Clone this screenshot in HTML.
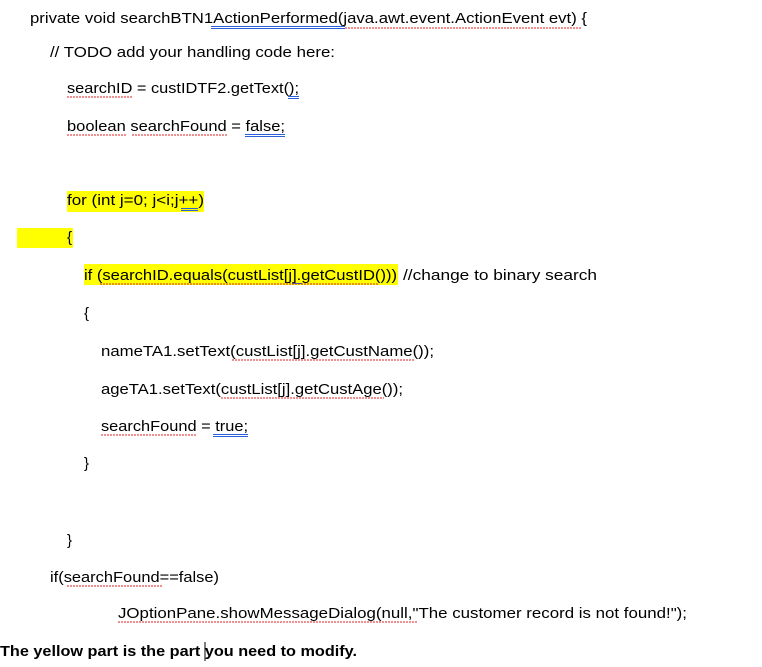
<!DOCTYPE html>
<html><head><meta charset="utf-8"><style>
html,body{margin:0;padding:0;background:#fff;width:762px;height:667px;overflow:hidden}
svg{display:block}
text{font-family:"Liberation Sans",sans-serif;font-size:15px;fill:#000}
</style></head><body>
<svg width="762" height="667" viewBox="0 0 762 667">
<g fill="#ffff00">
<rect x="67" y="191" width="137" height="21"/>
<rect x="17" y="228" width="56" height="20"/>
<rect x="84" y="264" width="314" height="21"/>
</g>
<text x="30" y="23" textLength="557" lengthAdjust="spacingAndGlyphs">private void searchBTN1ActionPerformed(java.awt.event.ActionEvent evt) {</text>
<text x="50" y="57" textLength="285" lengthAdjust="spacingAndGlyphs">// TODO add your handling code here:</text>
<text x="67" y="93" textLength="232" lengthAdjust="spacingAndGlyphs">searchID = custIDTF2.getText();</text>
<text x="67" y="131" textLength="218" lengthAdjust="spacingAndGlyphs">boolean searchFound = false;</text>
<text x="67" y="205" textLength="137" lengthAdjust="spacingAndGlyphs">for (int j=0; j&lt;i;j++)</text>
<text x="67" y="242">{</text>
<text x="84" y="280" textLength="313" lengthAdjust="spacingAndGlyphs">if (searchID.equals(custList[j].getCustID()))</text>
<text x="403" y="280" textLength="194" lengthAdjust="spacingAndGlyphs">//change to binary search</text>
<text x="84" y="318">{</text>
<text x="101" y="356" textLength="333" lengthAdjust="spacingAndGlyphs">nameTA1.setText(custList[j].getCustName());</text>
<text x="101" y="394" textLength="302" lengthAdjust="spacingAndGlyphs">ageTA1.setText(custList[j].getCustAge());</text>
<text x="101" y="431" textLength="147" lengthAdjust="spacingAndGlyphs">searchFound = true;</text>
<text x="84" y="468">}</text>
<text x="67" y="545">}</text>
<text x="50" y="582" textLength="169" lengthAdjust="spacingAndGlyphs">if(searchFound==false)</text>
<text x="118" y="618" textLength="569" lengthAdjust="spacingAndGlyphs">JOptionPane.showMessageDialog(null,"The customer record is not found!");</text>
<text x="0" y="656" textLength="357" lengthAdjust="spacingAndGlyphs" font-weight="bold">The yellow part is the part you need to modify.</text>
<line x1="205" y1="642" x2="205" y2="661" stroke="#000" stroke-width="1"/>
<g stroke="#2b5fd9" stroke-width="1" fill="none">
<line x1="211" y1="26.5" x2="345" y2="26.5"/><line x1="211" y1="28.5" x2="345" y2="28.5"/>
<line x1="288" y1="96.5" x2="299" y2="96.5"/><line x1="288" y1="98.5" x2="299" y2="98.5"/>
<line x1="245" y1="134.5" x2="285" y2="134.5"/><line x1="245" y1="136.5" x2="285" y2="136.5"/>
<line x1="181" y1="208.5" x2="198" y2="208.5"/><line x1="181" y1="210.5" x2="198" y2="210.5"/>
<line x1="292" y1="283.5" x2="302" y2="283.5"/>
<line x1="213" y1="434.5" x2="248" y2="434.5"/><line x1="213" y1="436.5" x2="248" y2="436.5"/>
</g>
<g stroke="#e02020" stroke-width="1" fill="none" stroke-dasharray="2 1">
<line x1="345" y1="28" x2="582" y2="28"/>
<line x1="67" y1="97" x2="133" y2="97"/>
<line x1="67" y1="135" x2="127" y2="135"/><line x1="132" y1="135" x2="228" y2="135"/>
<line x1="100" y1="284" x2="378" y2="284"/>
<line x1="232" y1="360" x2="414" y2="360"/>
<line x1="221" y1="398" x2="384" y2="398"/>
<line x1="101" y1="435" x2="196" y2="435"/>
<line x1="67" y1="586" x2="162" y2="586"/>
<line x1="118" y1="622" x2="418" y2="622"/>
</g>
</svg>
</body></html>
